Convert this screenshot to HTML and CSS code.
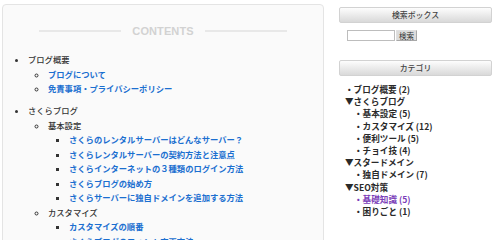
FILE: index.html
```html
<!DOCTYPE html>
<html lang="ja">
<head>
<meta charset="utf-8">
<link rel="stylesheet" href="styles.css">
</head>
<body>
<div class="page">
  <main class="toc">
    <div class="toc-title"><span class="rule"></span><span class="label">CONTENTS</span><span class="rule"></span></div>
    <ul class="l1">
      <li class="top">ブログ概要
        <ul class="l2">
          <li><a href="#">ブログについて</a></li>
          <li><a href="#">免責事項・プライバシーポリシー</a></li>
        </ul>
      </li>
      <li class="top">さくらブログ
        <ul class="l2">
          <li>基本設定
            <ul class="l3">
              <li><a href="#">さくらのレンタルサーバーはどんなサーバー？</a></li>
              <li><a href="#">さくらレンタルサーバーの契約方法と注意点</a></li>
              <li><a href="#">さくらインターネットの３種類のログイン方法</a></li>
              <li><a href="#">さくらブログの始め方</a></li>
              <li><a href="#">さくらサーバーに独自ドメインを追加する方法</a></li>
            </ul>
          </li>
          <li>カスタマイズ
            <ul class="l3">
              <li><a href="#">カスタマイズの順番</a></li>
              <li><a href="#">さくらブログのフォント変更方法</a></li>
            </ul>
          </li>
        </ul>
      </li>
    </ul>
  </main>
  <aside class="side">
    <div class="side-head">検索ボックス</div>
    <form class="search">
      <input class="search-input" type="text">
      <button class="search-btn" type="button">検索</button>
    </form>
    <div class="side-head cat-head">カテゴリ</div>
    <ul class="cats">
      <li>・ブログ概要 (2)</li>
      <li class="parent">▼さくらブログ</li>
      <li class="child">・基本設定 (5)</li>
      <li class="child">・カスタマイズ (12)</li>
      <li class="child">・便利ツール (5)</li>
      <li class="child">・チョイ技 (4)</li>
      <li class="parent">▼スタードメイン</li>
      <li class="child">・独自ドメイン (7)</li>
      <li class="parent">▼SEO対策</li>
      <li class="child visited">・基礎知識 (5)</li>
      <li class="child">・困りごと (1)</li>
    </ul>
  </aside>
</div>
</body>
</html>
```
FILE: styles.css
```css
html, body {
  margin: 0;
  padding: 0;
  background: #ffffff;
  overflow: hidden;
}
body {
  font-family: "Noto Sans CJK JP", "Noto Sans", sans-serif;
  color: #333;
}
.page {
  display: flex;
  align-items: flex-start;
  padding: 4px 0 0 2px;
  gap: 15px;
  height: 236px;
}
.toc {
  width: 320px;
  height: 260px;
  box-sizing: content-box;
  border: 1px solid #e4e4e4;
  border-radius: 4px;
  background: #fafafa;
  padding-top: 19px;
}
.toc-title {
  display: flex;
  align-items: center;
  gap: 11px;
  margin: 0 36px 0 36px;
  height: 14px;
}
.toc-title .rule {
  flex: 1;
  height: 2px;
  background: #e8e8e8;
}
.toc-title .label {
  font-family: "Liberation Sans", Arial, sans-serif;
  font-weight: bold;
  font-size: 11px;
  color: #d2d2d2;
  letter-spacing: 0.1px;
}
.l1, .l2, .l3 {
  margin: 0;
  font-size: 8.3px;
  line-height: 14.5px;
}
.l1 {
  list-style: disc;
  padding-left: 25px;
  margin-top: 14px;
}
.l2 {
  list-style: circle;
  padding-left: 20px;
}
.l3 {
  list-style: square;
  padding-left: 21px;
}
.l1 > li.top {
  margin-bottom: 7.5px;
}
.toc li {
  color: #333;
  font-weight: 500;
}
.toc a {
  color: #1b6fd0;
  font-weight: bold;
  text-decoration: none;
}
.side {
  width: 153px;
  padding-top: 3px;
}
.side-head {
  height: 14px;
  line-height: 14px;
  border: 1px solid #d2d2d2;
  border-radius: 2px;
  background: linear-gradient(#fdfdfd, #e9e9e9 55%, #d9d9d9);
  text-align: center;
  font-size: 7.9px;
  color: #444;
  font-weight: 500;
}
.search {
  display: flex;
  align-items: center;
  gap: 1px;
  margin: 7px 0 0 8px;
  height: 11px;
}
.search-input {
  width: 48px;
  height: 11px;
  box-sizing: border-box;
  border: 1px solid #bdbdbd;
  background: #fff;
  padding: 0;
  margin: 0;
}
.search-btn {
  width: 21px;
  height: 11px;
  box-sizing: border-box;
  padding: 0;
  margin: 0;
  border: 1px solid #a8a8a8;
  border-top-color: #e0e0e0;
  border-left-color: #e0e0e0;
  background: #dcdcdc;
  font-family: "Noto Sans CJK JP", sans-serif;
  font-size: 7.5px;
  line-height: 9px;
  color: #333;
}
.cat-head {
  margin-top: 19px;
}
.cats {
  list-style: none;
  margin: 7px 0 0 0;
  padding: 0 0 0 6px;
  font-size: 8.6px;
  line-height: 12.2px;
  font-weight: bold;
  color: #2a2a2a;
}
.cats .child {
  padding-left: 9px;
}
.cats .parent {
  padding-left: 0;
}
.cats .visited {
  color: #7a3db8;
}
```
